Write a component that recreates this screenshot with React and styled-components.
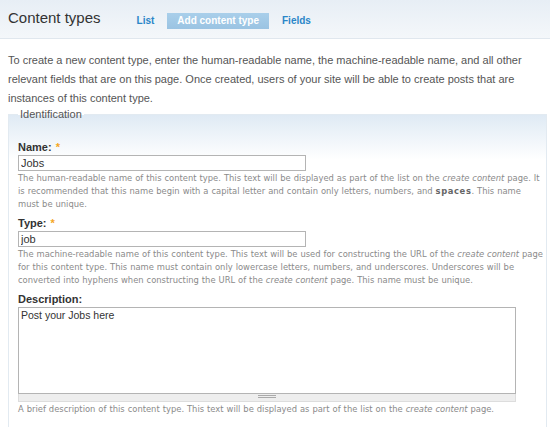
import React from 'react';
import styled, { createGlobalStyle } from 'styled-components';

const GlobalStyle = createGlobalStyle`
  body {
    margin: 0;
    background: #fff;
    font-family: "Liberation Sans", Arial, sans-serif;
    color: #333;
  }
`;

const Header = styled.div`
  display: flex;
  align-items: flex-start;
  height: 38px;
  padding: 0 8px;
  background: linear-gradient(180deg, #e7eef5 0%, #f4f7fa 100%);
  border-bottom: 1px solid #e0e7ee;
`;

const Title = styled.h1`
  margin: 9px 26px 0 0;
  font-size: 15px;
  line-height: 18px;
  font-weight: normal;
  color: #333;
`;

const Tabs = styled.ul`
  list-style: none;
  display: flex;
  gap: 3px;
  margin: 13px 0 0;
  padding: 0;
`;

const Tab = styled.li`
  a {
    display: block;
    height: 16px;
    line-height: 16px;
    padding: 0 10px;
    font-size: 10px;
    font-weight: bold;
    text-decoration: none;
    color: ${({ active }) => (active ? '#fff' : '#2a86c8')};
    background: ${({ active }) =>
      active ? 'linear-gradient(180deg, #a9cfea 0%, #9ac3e2 100%)' : 'transparent'};
  }
`;

const Intro = styled.p`
  margin: 12px 0 0;
  padding: 0 8px;
  font-size: 11px;
  line-height: 19px;
  color: #555;
`;

const Fieldset = styled.fieldset`
  margin: 0 3px 0 8px;
  padding: 0 0 20px 9px;
  border: 1px solid #e2eaf1;
  border-bottom: none;
  background: linear-gradient(180deg, #dfeaf4 0px, #ffffff 45px);
  min-width: 0;
`;

const Legend = styled.legend`
  padding: 0 2px;
  font-size: 11px;
  line-height: 12px;
  color: #555;
`;

const Content = styled.div`
  padding-top: 20px;
`;

const FormItem = styled.div`
  margin-bottom: 5px;
`;

const Label = styled.label`
  display: block;
  font-size: 11px;
  line-height: 14px;
  font-weight: bold;
  color: #333;
  margin-bottom: 1px;
`;

const Required = styled.span`
  color: #f5a623;
  margin-left: 4px;
`;

const TextInput = styled.input`
  display: block;
  box-sizing: border-box;
  width: 288px;
  height: 16px;
  margin: 0;
  padding: 0 2px;
  border: 1px solid #b4b4b4;
  font-family: "Liberation Sans", Arial, sans-serif;
  font-size: 11px;
  color: #333;
  background: #fff;
  outline: none;
`;

const Help = styled.div`
  font-family: "DejaVu Sans", Verdana, sans-serif;
  font-size: 8.4px;
  word-spacing: 0.3px;
  line-height: 13px;
  color: #8a8a8a;
  margin-top: 1px;
  padding-right: 1.5px;

  em { font-style: italic; }
  strong { font-weight: bold; color: #666; letter-spacing: 0.6px; }
`;

const TextArea = styled.textarea`
  display: block;
  box-sizing: border-box;
  width: 498px;
  height: 87px;
  margin: 0;
  padding: 1px 2px;
  border: 1px solid #b4b4b4;
  font-family: "Liberation Sans", Arial, sans-serif;
  font-size: 10.5px;
  color: #333;
  resize: none;
  outline: none;
`;

const Grippie = styled.div`
  box-sizing: border-box;
  width: 498px;
  height: 8px;
  background: #eee;
  border: 1px solid #ddd;
  border-top: none;
  display: flex;
  justify-content: center;
  padding-top: 1px;

  span {
    width: 18px;
    height: 1px;
    border-top: 1px solid #aaa;
    border-bottom: 1px solid #aaa;
  }
`;

export default function App() {
  return (
    <>
      <GlobalStyle />
      <Header>
        <Title>Content types</Title>
        <Tabs>
          <Tab><a href="#list">List</a></Tab>
          <Tab active><a href="#add">Add content type</a></Tab>
          <Tab><a href="#fields">Fields</a></Tab>
        </Tabs>
      </Header>
      <Intro>
        To create a new content type, enter the human-readable name, the machine-readable name, and all other
        relevant fields that are on this page. Once created, users of your site will be able to create posts that are
        instances of this content type.
      </Intro>
      <Fieldset>
        <Legend>Identification</Legend>
        <Content>
          <FormItem>
            <Label>Name:<Required>*</Required></Label>
            <TextInput defaultValue="Jobs" />
            <Help>
              The human-readable name of this content type. This text will be displayed as part of the list on
              the <em>create content</em> page. It is recommended that this name begin with a capital letter and
              contain only letters, numbers, and <strong>spaces</strong>. This name must be unique.
            </Help>
          </FormItem>
          <FormItem>
            <Label>Type:<Required>*</Required></Label>
            <TextInput defaultValue="job" />
            <Help>
              The machine-readable name of this content type. This text will be used for constructing the URL of
              the <em>create content</em> page for this content type. This name must contain only lowercase
              letters, numbers, and underscores. Underscores will be converted into hyphens when constructing the
              URL of the <em>create content</em> page. This name must be unique.
            </Help>
          </FormItem>
          <FormItem>
            <Label>Description:</Label>
            <TextArea defaultValue="Post your Jobs here" />
            <Grippie><span /></Grippie>
            <Help>
              A brief description of this content type. This text will be displayed as part of the list on
              the <em>create content</em> page.
            </Help>
          </FormItem>
        </Content>
      </Fieldset>
    </>
  );
}
